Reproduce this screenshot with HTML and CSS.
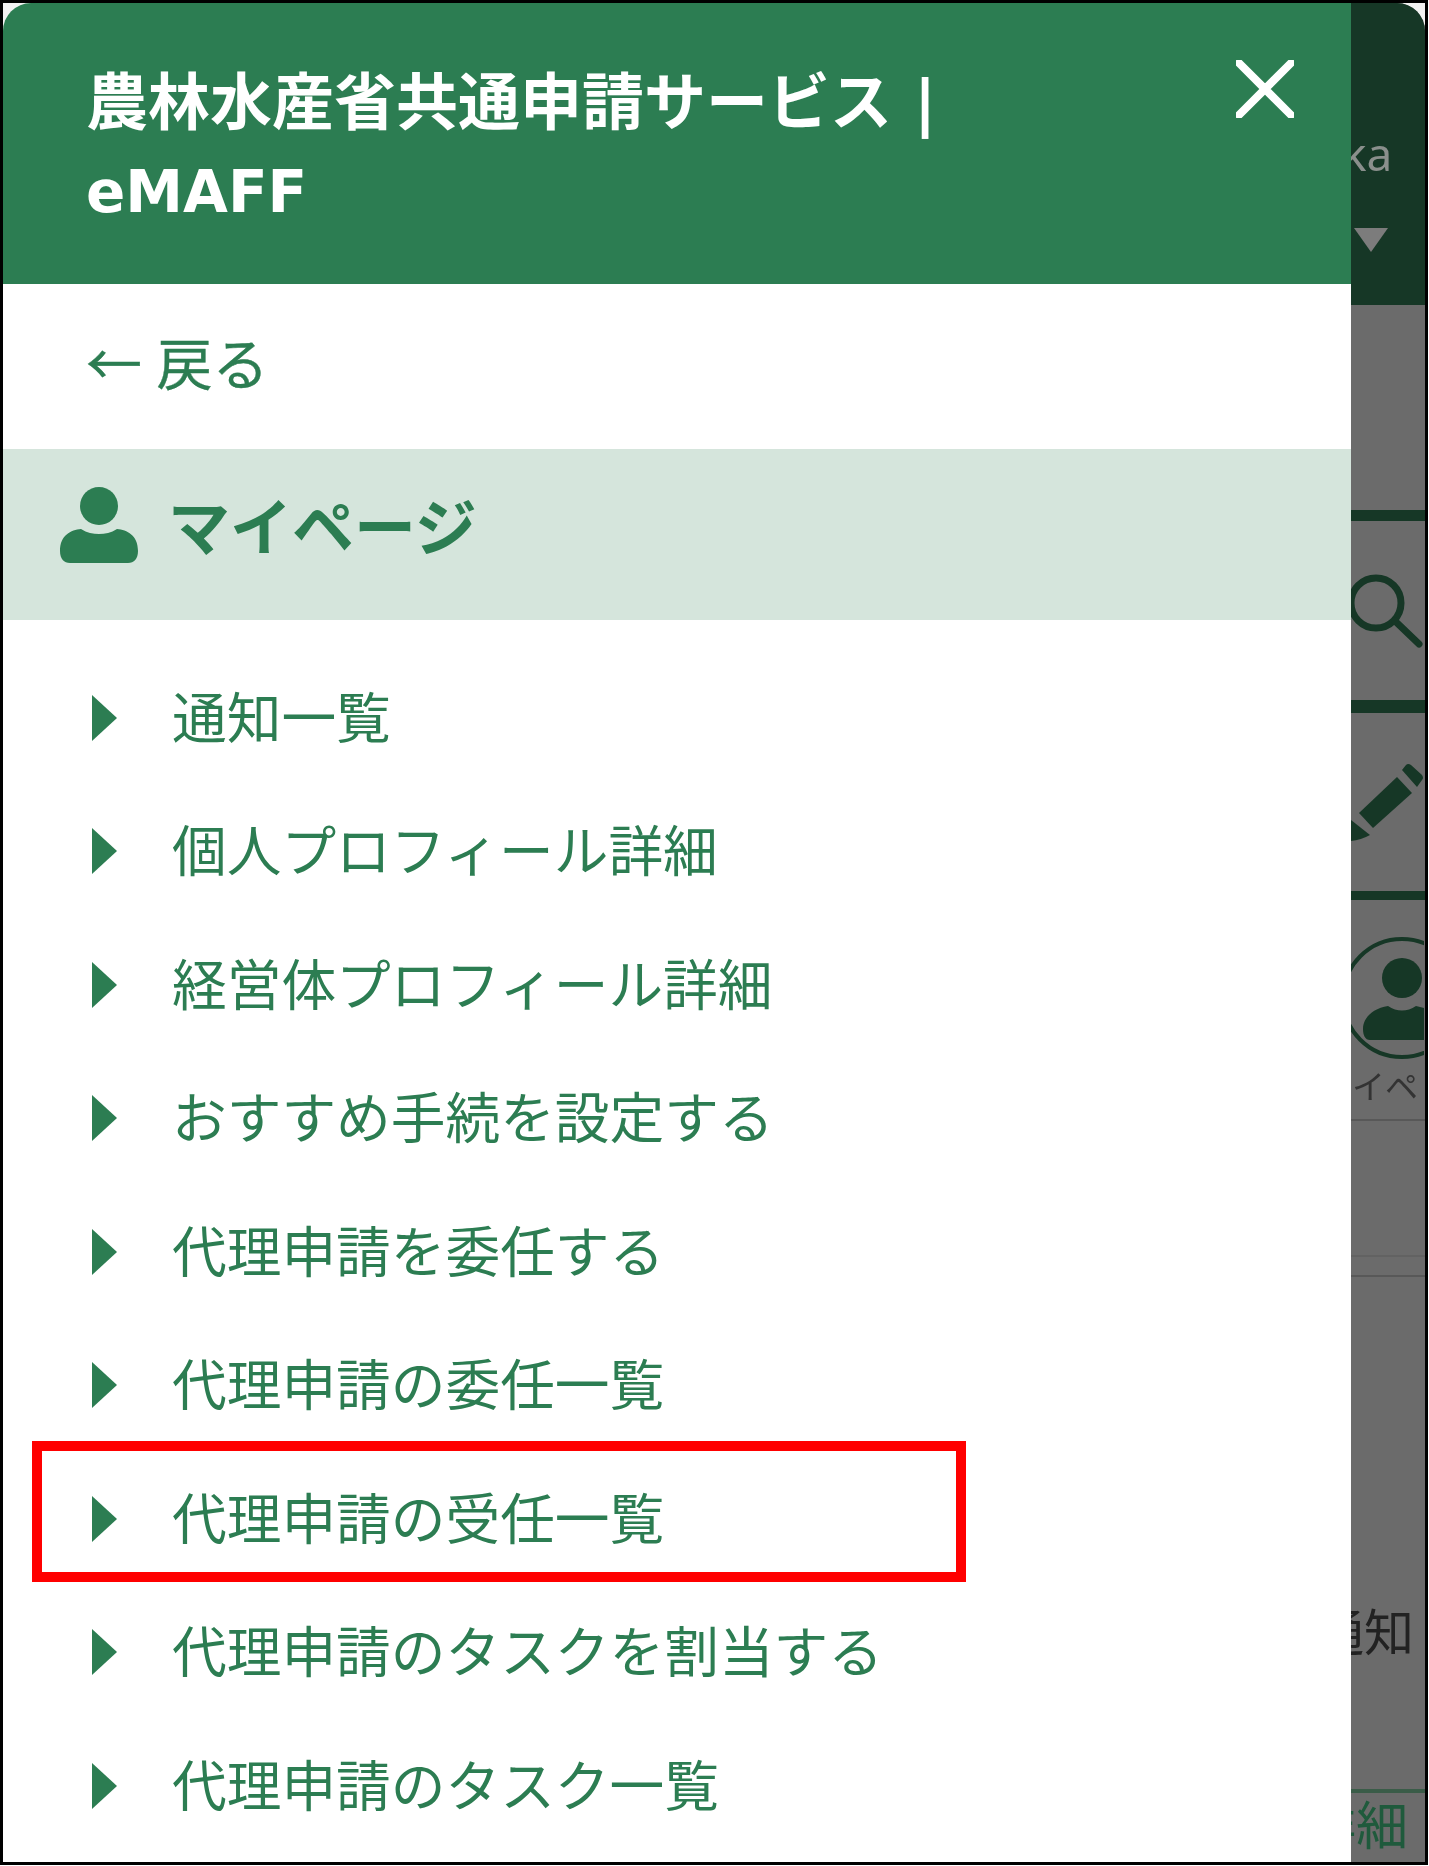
FILE: index.html
```html
<!DOCTYPE html>
<html lang="ja">
<head>
    <meta charset="UTF-8">
    <title>農林水産省共通申請サービス | eMAFF</title>
    <link rel="stylesheet" href="styles.css">
</head>
<body>
    <div class="frame">
        <!-- Slide-in menu -->
        <nav class="drawer">
            <header class="drawer-head">
                <h1>農林水産省共通申請サービス |<span class="latin">eMAFF</span></h1>
                <svg class="close-icon" viewBox="0 0 58 58">
                    <path d="M3 3L55 55M55 3L3 55"/>
                </svg>
            </header>
            <a class="back-link">← 戻る</a>
            <div class="section-title">
                <svg class="person-icon" viewBox="0 0 78 78">
                    <circle cx="39" cy="21" r="19"/>
                    <path d="M0 66C0 50 11 45 21 44C27 48 33 49 39 49C45 49 51 48 57 44C67 45 78 50 78 66C78 74 74 78 68 78H10C4 78 0 74 0 66Z"/>
                </svg>
                <span>マイページ</span>
            </div>
            <ul class="menu">
                <li>通知一覧</li>
                <li>個人プロフィール詳細</li>
                <li>経営体プロフィール詳細</li>
                <li>おすすめ手続を設定する</li>
                <li>代理申請を委任する</li>
                <li>代理申請の委任一覧</li>
                <li>代理申請の受任一覧</li>
                <li>代理申請のタスクを割当する</li>
                <li>代理申請のタスク一覧</li>
            </ul>
        </nav>

        <!-- Page behind the dimmed overlay -->
        <div class="behind">
            <div class="behind-top">
                <span class="user-name">ka</span>
                <span class="caret"></span>
            </div>
            <div class="bar bar-one"></div>
            <svg class="tool-icon search-icon" viewBox="0 0 73 90">
                <circle cx="25" cy="32" r="25"/>
                <path d="M44 50L68 73"/>
            </svg>
            <div class="bar bar-two"></div>
            <svg class="tool-icon pen-icon" viewBox="0 0 73 84">
                <path class="solid" d="M8 53L46 17L61 33L22 68Z"/>
                <path class="solid" d="M51 10L55 5Q57 3 60 5L71 15Q73 18 71 20L66 27Z"/>
                <path class="solid" d="M0 60L19 75Q10 80 0 81Z"/>
            </svg>
            <div class="bar bar-three"></div>
            <svg class="tool-icon me-icon" viewBox="0 0 73 128">
                <circle cx="51" cy="64" r="59"/>
                <circle class="solid" cx="51" cy="44" r="20"/>
                <path class="solid" d="M12 95C12 83 23 74 37 72C46 78 56 78 65 72L73 74V106H19C14 106 12 101 12 95Z"/>
            </svg>
            <div class="me-label">マイペ</div>
            <div class="rule rule-one"></div>
            <div class="rule rule-two"></div>
            <div class="rule rule-three"></div>
            <div class="notice">通知</div>
            <div class="rule rule-green"></div>
            <div class="detail">詳細</div>
        </div>

        <!-- Annotation around the item to click -->
        <div class="red-mark"></div>
    </div>
</body>
</html>
```

FILE: styles.css
```css
/* General reset */
* {
    margin: 0;
    padding: 0;
    box-sizing: border-box;
}

body {
    background-color: #fff;
    font-family: "Noto Sans", "Noto Sans CJK JP", sans-serif;
}

.frame {
    position: relative;
    display: flex;
    width: 1428px;
    height: 1865px;
    border: 3px solid #000;
    background-color: #f2f2f2;
    overflow: hidden;
}

/* Drawer */
.drawer {
    flex: none;
    width: 1348px;
    background-color: #fff;
    color: #2c7d52;
    border-top-left-radius: 28px;
    overflow: hidden;
    filter: blur(0.6px);
}

.drawer-head {
    display: flex;
    justify-content: space-between;
    height: 281px;
    padding: 52px 57px 0 83px;
    background-color: #2c7d52;
    color: #fff;
}

.drawer-head h1 {
    font-size: 62px;
    line-height: 93px;
    font-weight: 700;
}

.latin {
    display: block;
    font-family: "DejaVu Sans", sans-serif;
    font-size: 58px;
    line-height: 88px;
}

.close-icon {
    flex: none;
    width: 58px;
    height: 58px;
    margin-top: 5px;
    fill: none;
    stroke: #fff;
    stroke-width: 8;
    stroke-linecap: round;
}

.back-link {
    display: flex;
    align-items: center;
    height: 165px;
    padding: 0 0 12px 83px;
    font-size: 56px;
    -webkit-text-stroke: 0.4px #2c7d52;
}

.section-title {
    display: flex;
    align-items: center;
    gap: 30px;
    height: 171px;
    padding: 0 0 21px 57px;
    background-color: #d5e5dc;
    font-size: 62px;
    font-weight: 700;
}

.person-icon {
    width: 78px;
    height: 78px;
    fill: #2c7d52;
}

.menu {
    list-style: none;
    padding-top: 30px;
}

.menu li {
    display: flex;
    align-items: center;
    gap: 55px;
    height: 133.5px;
    padding: 0 0 5px 89px;
    font-size: 54.7px;
}

.menu li::before {
    content: "";
    width: 0;
    height: 0;
    margin-top: 7px;
    border-top: 23px solid transparent;
    border-bottom: 23px solid transparent;
    border-left: 25px solid #2c7d52;
}

/* Dimmed page on the right */
.behind {
    flex: 1;
    min-width: 0;
    background-color: #6b6b6b;
    border-top-right-radius: 28px;
    overflow: hidden;
    filter: blur(0.6px);
}

.behind-top {
    height: 302px;
    background-color: #163726;
    color: #8a8f8c;
}

.user-name {
    display: block;
    padding-top: 126px;
    padding-bottom: 2px;
    font-size: 46px;
    line-height: 48px;
    white-space: nowrap;
    text-indent: -9px;
}

.caret {
    display: block;
    width: 0;
    margin: 49px 0 0 3px;
    border-top: 24px solid #7c7c7c;
    border-left: 17px solid transparent;
    border-right: 17px solid transparent;
}

.bar {
    height: 11px;
    background-color: #163726;
}

.bar-one {
    margin-top: 205px;
}

.bar-two {
    height: 13px;
    margin-top: 39px;
}

.bar-three {
    height: 9px;
    margin-top: 47px;
}

.tool-icon {
    display: block;
    width: 73px;
    fill: none;
    stroke: #163726;
}

.tool-icon .solid {
    fill: #163726;
    stroke: none;
}

.search-icon {
    height: 90px;
    margin-top: 50px;
    stroke-width: 7;
    stroke-linecap: round;
    overflow: visible;
}

.pen-icon {
    height: 84px;
    margin-top: 47px;
}

.me-icon {
    height: 128px;
    margin-top: 34px;
    stroke-width: 4;
}

.me-label {
    width: 73px;
    margin-top: 5px;
    color: #333;
    font-size: 33px;
    line-height: 40px;
    white-space: nowrap;
    text-indent: -32px;
    overflow: hidden;
}

.rule {
    height: 2px;
    background-color: #585858;
}

.rule-one {
    margin-top: 12px;
}

.rule-two {
    margin-top: 134px;
    background-color: #626262;
}

.rule-three {
    margin-top: 18px;
}

.notice {
    margin-top: 325px;
    color: #222;
    font-size: 50px;
    line-height: 60px;
    white-space: nowrap;
    text-indent: -37px;
}

.rule-green {
    height: 4px;
    margin-top: 127px;
    background-color: #3a5c48;
}

.detail {
    color: #1f5a3c;
    font-size: 52px;
    line-height: 64px;
    white-space: nowrap;
    text-indent: -47px;
}

/* Red annotation box */
.red-mark {
    position: absolute;
    left: 29px;
    top: 1438px;
    width: 934px;
    height: 141px;
    border: 10px solid #f00;
}
```
